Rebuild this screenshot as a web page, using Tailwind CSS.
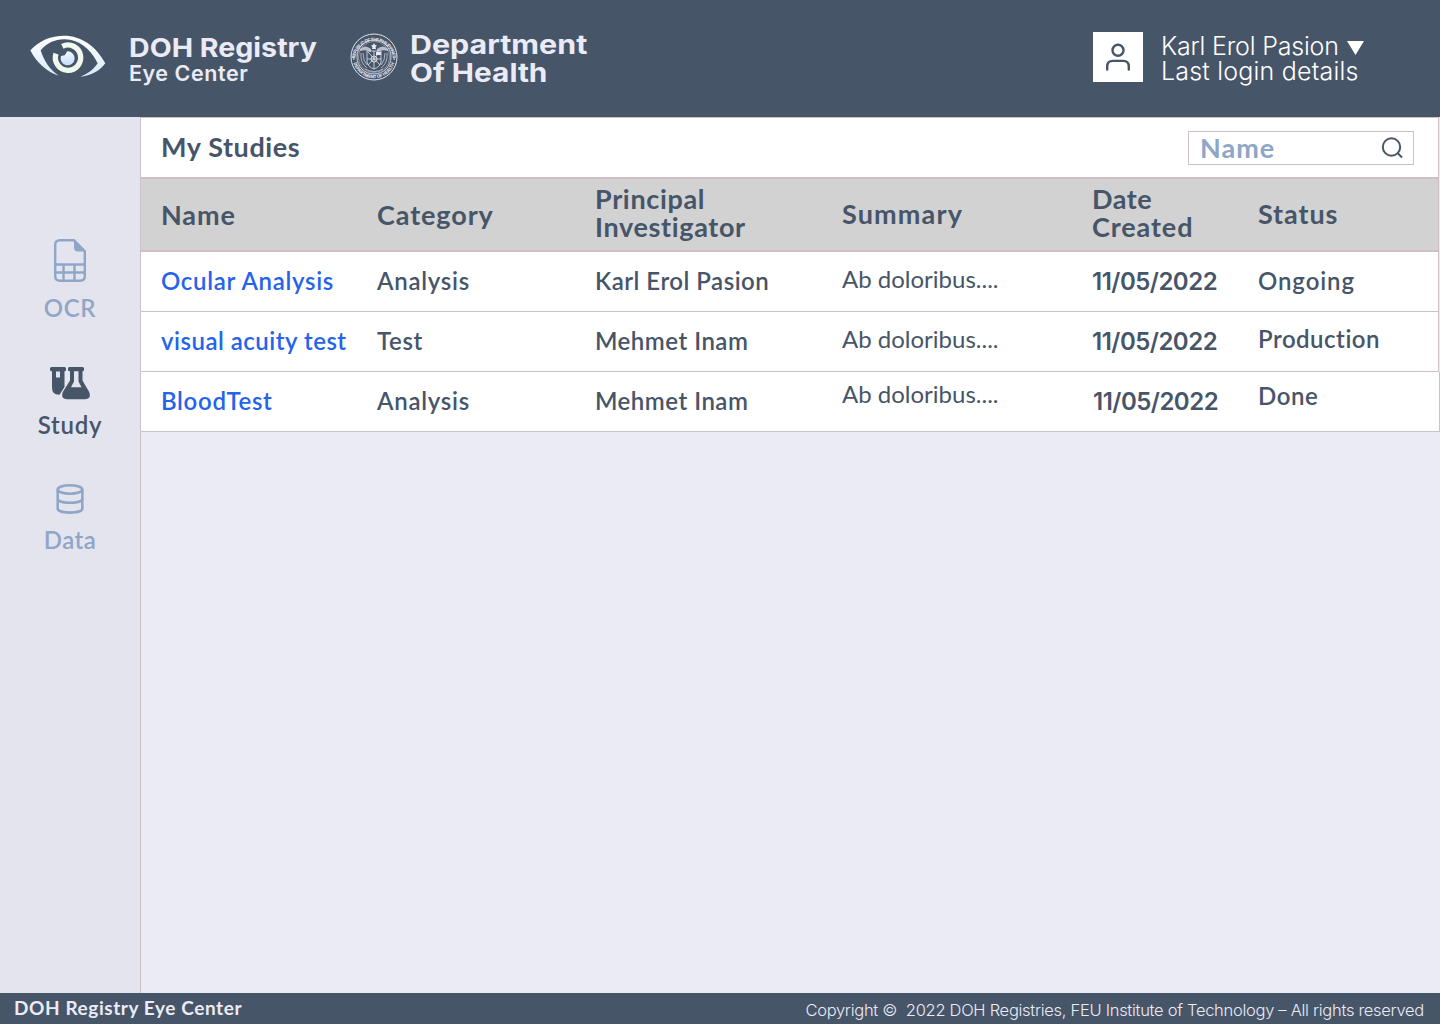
<!DOCTYPE html>
<html lang="en">
<head>
<meta charset="utf-8">
<title>My Studies</title>
<script src="https://cdn.jsdelivr.net/npm/@tailwindcss/browser@4"></script>
</head>
<body class="flex h-[1024px] w-[1440px] flex-col overflow-hidden bg-[#ebebf5] font-[Lato,sans-serif] text-[#475569]">

<header class="flex h-[117px] shrink-0 items-start bg-[#475569] text-[#ebebf5]">
  <svg class="mt-[34px] ml-[30px] h-[44px] w-[76px] shrink-0" viewBox="30 40 228 132" fill="none">
    <defs>
      <linearGradient id="lid" x1="0" y1="0" x2="0" y2="1"><stop offset="0" stop-color="#fff"/><stop offset="1" stop-color="#d7ebfc"/></linearGradient>
      <linearGradient id="pupil" x1="0" y1="0" x2="0" y2="1"><stop offset="0" stop-color="#f4faff"/><stop offset="1" stop-color="#c3defa"/></linearGradient>
    </defs>
    <path fill="url(#lid)" d="M31 89C57 59 95 45 132 45C184 45 228 76 256 128C239 151 212 166 181 168C203 160 221 146 233 128C210 82 176 57 135 56C106 55 81 67 62 89C72 122 90 148 116 165C82 155 49 126 31 89Z"/>
    <path stroke="#eff9ec" stroke-width="16" d="M127 77A38 38 0 1 1 108 99"/>
    <path fill="url(#pupil)" d="M142 92A21 21 0 1 1 123 106L134 104Z"/>
  </svg>
  <div class="mt-[34px] ml-[23px] w-[221px]">
    <p class="origin-left scale-x-[1.1] text-[26px] leading-[27px] font-bold font-[Inter,sans-serif] whitespace-nowrap">DOH Registry</p>
    <p class="text-[21.500px] leading-[24px] font-semibold tracking-[0.550px] font-[Inter,sans-serif]">Eye Center</p>
  </div>
  <svg class="mt-[32.5px] h-12 w-12 shrink-0" viewBox="0 0 48 48" fill="none" stroke="#dfe3ec">
    <defs>
      <path id="arcTop" d="M5 27A19 19 0 1 1 43 27"/>
      <path id="arcBottom" d="M2.8 26A21.3 21.3 0 0 0 45.2 26"/>
    </defs>
    <circle cx="24" cy="24" r="23" stroke-width="1"/>
    <circle cx="24" cy="24" r="17" stroke-width=".9"/>
    <circle cx="24" cy="24" r="15.6" stroke-width=".4"/>
    <g fill="#ebebf5" stroke="none" font-family="Inter, sans-serif" font-weight="700" font-size="4.4">
      <text><textPath href="#arcTop" startOffset="50%" text-anchor="middle" textLength="56">REPUBLIC OF THE PHILIPPINES</textPath></text>
      <text><textPath href="#arcBottom" startOffset="50%" text-anchor="middle" textLength="54">DEPARTMENT OF HEALTH</textPath></text>
      <circle cx="3.8" cy="26" r=".8"/><circle cx="44.2" cy="26" r=".8"/>
      <path d="M24 10l1 2 2 .5-1.500 1.500.5 2H22l.5-2-1.500-1.500 2-.5z"/>
      <path d="M10 16q5-5 11 0v3q-5-3-11-1zM38 16q-5-5-11 0v3q5-3 11-1z" opacity=".7"/>
      <path d="M26 19h5v3h-5z"/>
    </g>
    <path stroke-width=".8" d="M17 18h14v11q-1 5-7 7q-6-2-7-7zM24 18v18M17 26h14M18 19l12 13M30 19L18 32"/>
    <circle cx="24" cy="26" r="3" stroke-width=".9"/>
    <path stroke-width=".9" opacity=".75" d="M11 20q-1 10 6 15M37 20q1 10-6 15M13 20q0 8 4 12M35 20q0 8-4 12M15 36q9 5 18 0"/>
  </svg>
  <div class="mt-[31px] ml-[12px] font-[Inter,sans-serif] text-[26px] leading-[28px] font-bold whitespace-nowrap">
    <p class="origin-left scale-x-[1.17]">Department</p>
    <p class="origin-left scale-x-[1.145]">Of Health</p>
  </div>
  <div class="mt-[32px] mr-[76px] ml-auto flex text-white">
    <div class="flex h-[50px] w-[50px] items-center justify-center bg-white">
      <svg class="h-[30px] w-[30px]" viewBox="0 0 30 30" fill="none" stroke="#475569" stroke-width="2.4" stroke-linecap="round"><circle cx="15" cy="8.300" r="5.500"/><path d="M4.200 27.500V24.500C4.200 21 6.400 18.900 9.800 18.900H20.200C23.600 18.900 25.800 21 25.800 24.500V27.500"/></svg>
    </div>
    <div class="ml-[18px] w-[203px] font-[Inter,sans-serif] text-[25px] leading-[25px] font-light whitespace-nowrap">
      <p class="mt-[2px] flex items-center tracking-[-0.2px]">Karl Erol Pasion <svg class="mt-0.5 ml-[8px] h-[14px] w-[17px]" viewBox="0 0 17 14" fill="#fff"><path d="M0 0H17L8.500 14Z"/></svg></p>
      <p class="tracking-[0.2px]">Last login details</p>
    </div>
  </div>
</header>

<div class="flex min-h-0 flex-1">
  <nav class="flex w-[141px] shrink-0 flex-col items-center border-r border-[#cec0c4] bg-[#e4e4ee] text-[24px] leading-[30px] font-semibold text-[#8fa6c8]">
    <a class="mt-[122px] flex flex-col items-center">
      <svg class="h-[43px] w-[32px]" viewBox="0 0 32 43" fill="none" stroke="currentColor" stroke-width="2.400"><path d="M6 1.300H20L30.800 12.300V37Q30.800 41.700 26 41.700H6Q1.200 41.700 1.200 37V6Q1.200 1.300 6 1.300Z"/><path fill="currentColor" stroke="none" d="M20 1L31 12.500H24Q20 12.500 20 8.500Z"/><path d="M1 25.500H31M1 33.500H31M9.500 25.500V42M20.500 25.500V42"/></svg>
      <span class="mt-[11px] tracking-[0.6px]">OCR</span>
    </a>
    <a class="mt-[44px] flex flex-col items-center text-[#475569]">
      <svg class="h-[33px] w-[40px]" viewBox="0 0 40 33" fill="currentColor"><path fill-rule="evenodd" d="M1.500 0H14.500Q16 0 16 1.500V3Q16 4.300 14.500 4.300V16.500L14.500 20L9.500 27.800Q2 28 2 20.500V4.300Q0 4.300 0 3V1.500Q0 0 1.500 0ZM6 4.500V10.500H10V4.500Z"/><path fill-rule="evenodd" d="M19.500 0H32.500Q34 0 34 1.500V3Q34 4.300 32.500 4.300V13.500L39.200 25Q41.500 32 35.500 32.300H16.500Q10.500 32 12.800 25L20 13.500V4.300Q18 4.300 18 3V1.500Q18 0 19.500 0ZM24 4.300V14.500L21 20.300H31.500L28.500 14.500V4.300Z"/></svg>
      <span class="mt-[10px] tracking-[0.7px]">Study</span>
    </a>
    <a class="mt-[44px] flex flex-col items-center">
      <svg class="h-[30px] w-[28px]" viewBox="0 0 28 30" fill="none" stroke="currentColor" stroke-width="2.600"><ellipse cx="14" cy="5.500" rx="12.300" ry="4.200"/><path d="M1.700 5.500V24.500C1.700 30 26.300 30 26.300 24.500V5.500M1.700 15C1.700 20 26.300 20 26.300 15"/></svg>
      <span class="mt-[11px] tracking-[0.4px]">Data</span>
    </a>
  </nav>

  <main class="min-w-0 flex-1">
    <div class="w-[1298px] border-t border-r border-[#cec0c4] bg-white">
      <div class="flex h-[59px] items-center pr-6 pl-5">
        <h1 class="-mt-0.5 text-[27px] leading-[32px] font-bold tracking-[0.6px]">My Studies</h1>
        <label class="ml-auto flex h-[34px] w-[226px] items-center justify-between border border-[#cec0c4] pr-[10px] pl-[11px] text-[27px] leading-[32px] font-bold tracking-[1px] text-[#8fa6c8]">Name
          <svg class="mt-px h-[22px] w-[22px]" viewBox="0 0 22 22" fill="none" stroke="#475569" stroke-width="2"><circle cx="10.500" cy="10" r="8.700"/><path d="M16.500 16L21 20.500"/></svg>
        </label>
      </div>
      <div class="grid h-[75px] grid-cols-[216px_218px_247px_250px_166px_1fr] items-center border-y-2 border-[#cec0c4] bg-[#d2d2d2] pl-5 text-[27px] leading-[28px] font-bold tracking-[0.9px]">
        <span>Name</span>
        <span>Category</span>
        <span class="-mt-1 tracking-[0.65px]">Principal<br>Investigator</span>
        <span class="-mt-0.5 tracking-[1.15px]">Summary</span>
        <span class="-mt-1"><span class="tracking-[0.5px]">Date</span><br>Created</span>
        <span class="-mt-0.5">Status</span>
      </div>
      <div class="grid h-[60px] grid-cols-[216px_218px_247px_250px_166px_1fr] items-center border-b border-[#cec0c4] pl-5 text-[24px] leading-[30px] font-semibold">
        <a class="-mt-0.5 tracking-[0.7px] text-[#2563eb]">Ocular Analysis</a>
        <span class="-mt-0.5 tracking-[0.75px]">Analysis</span>
        <span class="-mt-0.5 tracking-[0.5px]">Karl Erol Pasion</span>
        <span class="-mt-1.5 font-normal">Ab doloribus....</span>
        <span class="font-[Inter,sans-serif] tracking-[-0.5px]">11/05/2022</span>
        <span class="-mt-0.5 tracking-[0.9px]">Ongoing</span>
      </div>
      <div class="grid h-[60px] grid-cols-[216px_218px_247px_250px_166px_1fr] items-center border-b border-[#cec0c4] pl-5 text-[24px] leading-[30px] font-semibold">
        <a class="-mt-0.5 tracking-[0.5px] text-[#2563eb]">visual acuity test</a>
        <span class="-mt-0.5 tracking-[0.65px]">Test</span>
        <span class="-mt-0.5 tracking-[0.5px]">Mehmet Inam</span>
        <span class="-mt-1.5 font-normal">Ab doloribus....</span>
        <span class="font-[Inter,sans-serif] tracking-[-0.5px]">11/05/2022</span>
        <span class="-mt-1.5 tracking-[0.5px]">Production</span>
      </div>
    </div>
    <div class="grid h-[60px] grid-cols-[216px_218px_247px_251px_165px_1fr] items-center border-r border-b border-[#cec0c4] bg-white pl-5 text-[24px] leading-[30px] font-semibold">
      <a class="-mt-0.5 tracking-[0.68px] text-[#2563eb]">BloodTest</a>
      <span class="-mt-0.5 tracking-[0.75px]">Analysis</span>
      <span class="-mt-0.5 tracking-[0.5px]">Mehmet Inam</span>
      <span class="-mt-4 font-normal">Ab doloribus....</span>
      <span class="font-[Inter,sans-serif] tracking-[-0.5px]">11/05/2022</span>
      <span class="-mt-3 tracking-[0.55px]">Done</span>
    </div>
  </main>
</div>

<footer class="flex h-[31px] shrink-0 items-center justify-between bg-[#475569] pr-4 pl-[14px] text-[#ebebf5]">
  <span class="-mt-0.5 text-[19px] leading-[30px] font-bold tracking-[0.58px]">DOH Registry Eye Center</span>
  <span class="pt-0.5 font-[Inter,sans-serif] text-[16.500px] leading-[26px] font-light tracking-[-0.29px]">Copyright ©&nbsp; 2022 DOH Registries, FEU Institute of Technology – All rights reserved</span>
</footer>
</body>
</html>
